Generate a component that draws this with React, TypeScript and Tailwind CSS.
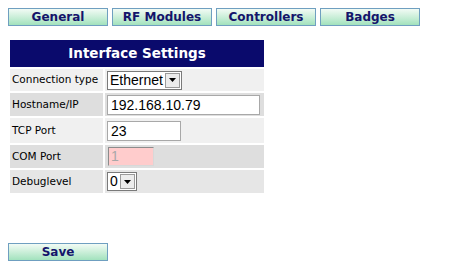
import React from "react";

const tabs = ["General", "RF Modules", "Controllers", "Badges"];

const btn =
  "w-[100px] h-[18px] border border-[#6f9fc0] bg-gradient-to-b from-[#f2fbf5] to-[#a2e2bd] text-[#14146b] font-bold text-[12px] leading-[16px] text-center";

const Arrow = () => (
  <span className="w-[15px] h-[15px] border border-[#9a9a9a] bg-[#ececec] flex items-center justify-center ml-[2px]">
    <svg width="7" height="4" viewBox="0 0 7 4">
      <path d="M0 0h7L3.5 4z" fill="#000" />
    </svg>
  </span>
);

export default function App() {
  return (
    <div className="w-[462px] h-[270px] bg-white relative font-['DejaVu_Sans',sans-serif]">
      <div className="flex gap-[4px] pl-[8px] pt-[8px]">
        {tabs.map((t) => (
          <div key={t} className={btn}>{t}</div>
        ))}
      </div>

      <div className="ml-[10px] mt-[14px] w-[254px]">
        <div className="h-[27px] bg-[#0a0a6c] text-white font-bold text-[13.5px] leading-[27px] text-center">
          Interface Settings
        </div>
        <div className="grid grid-cols-[93px_1fr] gap-[2px] mt-[2px] text-[10.5px] text-black">
          <div className="h-[22px] bg-[#f0f0f0] flex items-center pl-[2px]">Connection type</div>
          <div className="h-[22px] bg-[#f0f0f0] flex items-center pl-[2px]">
            <div className="flex items-center h-[19px] border border-[#7a7a7a] bg-white pl-[2px] pr-[1px] font-['Liberation_Sans',sans-serif] text-[14px]">
              Ethernet
              <Arrow />
            </div>
          </div>

          <div className="h-[23px] bg-[#dedede] flex items-center pl-[2px]">Hostname/IP</div>
          <div className="h-[23px] bg-[#dedede] flex items-center pl-[2px]">
            <div className="h-[20px] w-[153px] border border-[#a8a8a8] bg-white pl-[3px] font-['Liberation_Sans',sans-serif] text-[14px] leading-[18px]">
              192.168.10.79
            </div>
          </div>

          <div className="h-[25px] bg-[#f0f0f0] flex items-center pl-[2px]">TCP Port</div>
          <div className="h-[25px] bg-[#f0f0f0] flex items-center pl-[2px]">
            <div className="h-[20px] w-[74px] border border-[#a8a8a8] bg-white pl-[3px] font-['Liberation_Sans',sans-serif] text-[14px] leading-[18px]">
              23
            </div>
          </div>

          <div className="h-[23px] bg-[#dedede] flex items-center pl-[2px]">COM Port</div>
          <div className="h-[23px] bg-[#dedede] flex items-center pl-[3px]">
            <div className="h-[19px] w-[46px] border border-[#8c8c8c] border-r-[#d8d8d8] border-b-[#d8d8d8] bg-[#ffcccc] pl-[2px] text-[#a8a8a8] font-['Liberation_Sans',sans-serif] text-[14px] leading-[17px]">
              1
            </div>
          </div>

          <div className="h-[23px] bg-[#e6e6e6] flex items-center pl-[2px]">Debuglevel</div>
          <div className="h-[23px] bg-[#e6e6e6] flex items-center pl-[2px]">
            <div className="flex items-center h-[19px] border border-[#7a7a7a] bg-white pl-[2px] pr-[1px] font-['Liberation_Sans',sans-serif] text-[14px]">
              0
              <Arrow />
            </div>
          </div>
        </div>
      </div>

      <div className="pl-[8px] mt-[50px]">
        <div className={btn}>Save</div>
      </div>
    </div>
  );
}
